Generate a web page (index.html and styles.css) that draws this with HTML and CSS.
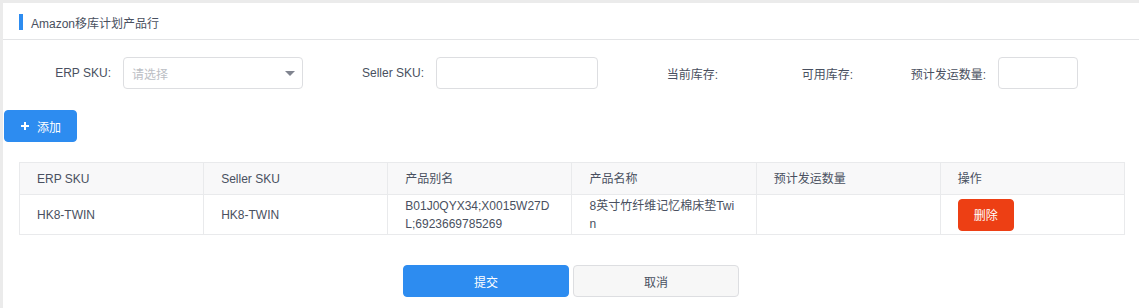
FILE: index.html
```html
<!DOCTYPE html>
<html lang="zh-CN">
<head>
    <meta charset="UTF-8">
    <meta name="viewport" content="width=device-width, initial-scale=1.0">
    <title>Amazon移库计划产品行</title>
    <link rel="stylesheet" href="styles.css">
</head>
<body>
    <div class="panel">
        <div class="panel-head">
            <span class="head-bar"></span>
            <span class="head-title">Amazon移库计划产品行</span>
        </div>

        <div class="form-row">
            <label class="form-label label-erp">ERP SKU:</label>
            <div class="select select-erp">
                <span class="placeholder">请选择</span>
                <svg class="caret" width="10" height="5" viewBox="0 0 10 5"><path d="M0 0 L10 0 L5 5 Z" fill="#80848f"/></svg>
            </div>
            <label class="form-label label-seller">Seller SKU:</label>
            <input class="input input-seller" type="text">
            <label class="form-label label-current">当前库存:</label>
            <label class="form-label label-usable">可用库存:</label>
            <label class="form-label label-plan">预计发运数量:</label>
            <input class="input input-qty" type="text">
        </div>

        <button class="btn btn-primary btn-add">
            <svg class="plus" width="8" height="8" viewBox="0 0 8 8"><path d="M4 0 V8 M0 4 H8" stroke="#fff" stroke-width="2"/></svg>
            <span>添加</span>
        </button>

        <table class="grid">
            <thead>
                <tr>
                    <th>ERP SKU</th>
                    <th>Seller SKU</th>
                    <th>产品别名</th>
                    <th>产品名称</th>
                    <th>预计发运数量</th>
                    <th>操作</th>
                </tr>
            </thead>
            <tbody>
                <tr>
                    <td>HK8-TWIN</td>
                    <td>HK8-TWIN</td>
                    <td>B01J0QYX34;X0015W27DL;6923669785269</td>
                    <td>8英寸竹纤维记忆棉床垫Twin</td>
                    <td></td>
                    <td><button class="btn btn-error">删除</button></td>
                </tr>
            </tbody>
        </table>

        <div class="actions">
            <button class="btn btn-primary btn-wide">提交</button>
            <button class="btn btn-default btn-wide">取消</button>
        </div>
    </div>
</body>
</html>
```

FILE: styles.css
```css
html, body {
    margin: 0;
    padding: 0;
}
body {
    background: #ebebeb;
    font-family: 'Liberation Sans', Arial, 'Noto Sans CJK SC', sans-serif;
    font-size: 12px;
    color: #495060;
}
.panel {
    margin: 3px 0 0 3px;
    min-height: calc(100vh - 3px);
    background: #fff;
}
.panel-head {
    height: 37px;
    box-sizing: border-box;
    padding: 2px 0 0 16px;
    border-bottom: 1px solid #e3e4e6;
    display: flex;
    align-items: center;
}
.head-bar {
    width: 4px;
    height: 16px;
    background: #2d8cf0;
    margin-right: 8px;
}
.head-title {
    color: #495060;
}
.form-row {
    display: flex;
    align-items: center;
    margin-top: 17px;
    height: 32px;
}
.form-label {
    box-sizing: border-box;
    padding-right: 12px;
    text-align: right;
    white-space: nowrap;
}
.label-erp {
    width: 120px;
}
.label-seller {
    width: 133px;
}
.label-current {
    width: 132px;
}
.label-usable {
    width: 135px;
}
.label-plan {
    width: 133px;
}
.select, .input {
    box-sizing: border-box;
    height: 32px;
    border: 1px solid #dddee1;
    border-radius: 4px;
    background: #fff;
}
.select {
    display: flex;
    align-items: center;
    justify-content: space-between;
    padding: 0 7px 0 8px;
}
.select-erp {
    width: 180px;
}
.placeholder {
    color: #bbbec4;
}
.input {
    padding: 0 7px;
    outline: none;
}
.input-seller {
    width: 162px;
}
.input-qty {
    width: 80px;
}
.btn {
    box-sizing: border-box;
    height: 32px;
    border: 1px solid transparent;
    border-radius: 4px;
    font-family: inherit;
    font-size: 12px;
    white-space: nowrap;
    cursor: pointer;
}
.btn-primary {
    background: #2d8cf0;
    border-color: #2d8cf0;
    color: #fff;
}
.btn-error {
    background: #ed3f14;
    border-color: #ed3f14;
    color: #fff;
    padding: 0 15px;
}
.btn-default {
    background: #f7f7f7;
    border-color: #dddee1;
    color: #495060;
}
.btn-add {
    display: flex;
    align-items: center;
    gap: 8px;
    margin: 21px 0 0 1px;
    padding: 0 15px 0 16px;
}
.plus {
    display: block;
}
.grid {
    width: calc(100% - 30px);
    margin: 20px 14px 0 16px;
    border-collapse: collapse;
    table-layout: fixed;
    border: 1px solid #e3e4e6;
}
.grid th, .grid td {
    border: 1px solid #e9eaec;
    padding: 0 16px 0 17px;
    text-align: left;
    font-weight: normal;
    line-height: 18px;
    word-break: break-all;
}
.grid th {
    height: 31px;
    background: #f8f8f9;
}
.grid td {
    height: 39px;
}
.grid td .btn {
    display: block;
}
.actions {
    display: flex;
    justify-content: center;
    gap: 4px;
    margin-top: 30px;
}
.btn-wide {
    width: 166px;
}
```
